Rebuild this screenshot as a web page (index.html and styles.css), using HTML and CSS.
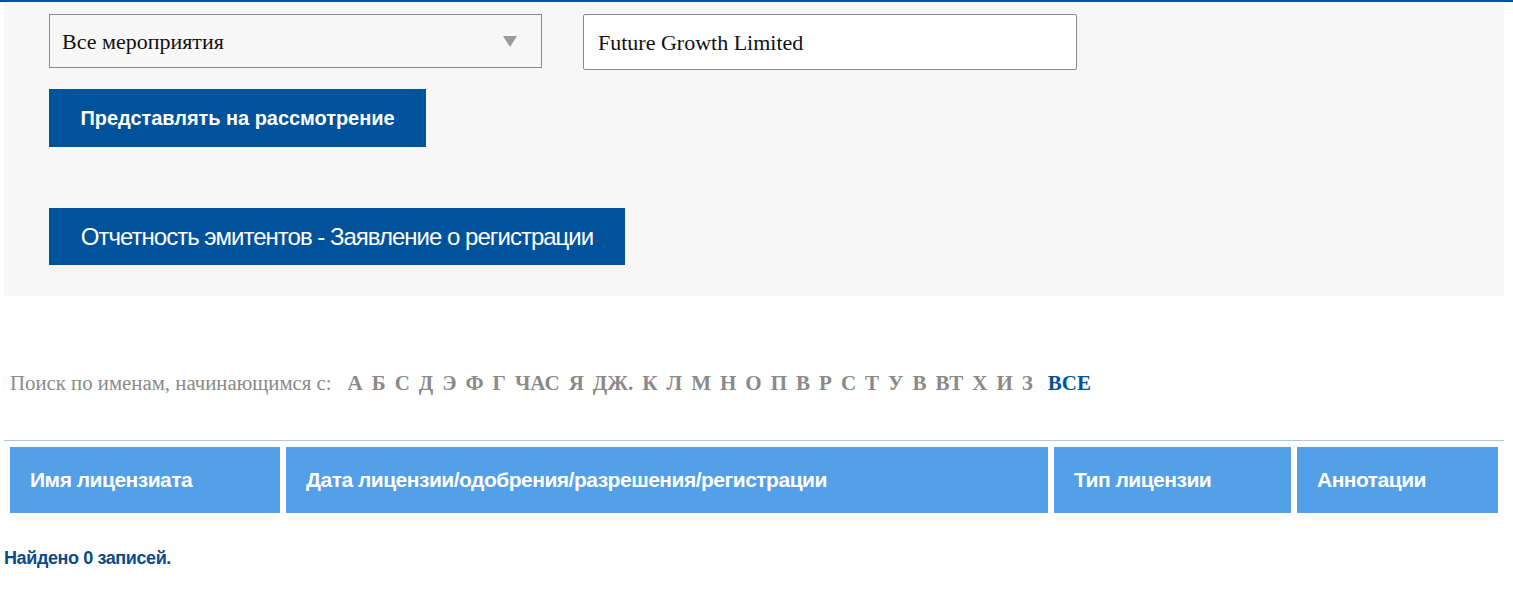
FILE: index.html
```html
<!DOCTYPE html>
<html lang="ru">
<head>
<meta charset="utf-8">
<title>Поиск лицензиатов</title>
<link rel="stylesheet" href="styles.css">
</head>
<body>
<div class="topline"></div>
<div class="page">
  <section class="panel">
    <div class="filters">
      <div class="select">
        <span class="select-text">Все мероприятия</span>
        <svg class="select-arrow" width="14" height="11" viewBox="0 0 14 11"><polygon points="0,0 14,0 7,11" fill="#9b9b9b"/></svg>
      </div>
      <input class="textbox" type="text" value="Future Growth Limited">
    </div>
    <div class="btn-row">
      <button class="btn btn-submit">Представлять на рассмотрение</button>
    </div>
    <div class="btn-row btn-row-second">
      <button class="btn btn-report">Отчетность эмитентов - Заявление о регистрации</button>
    </div>
  </section>

  <nav class="alpha">
    <span class="alpha-label">Поиск по именам, начинающимся с:</span>
    <a class="alpha-link">А</a>
    <a class="alpha-link">Б</a>
    <a class="alpha-link">С</a>
    <a class="alpha-link">Д</a>
    <a class="alpha-link">Э</a>
    <a class="alpha-link">Ф</a>
    <a class="alpha-link">Г</a>
    <a class="alpha-link">ЧАС</a>
    <a class="alpha-link">Я</a>
    <a class="alpha-link">ДЖ.</a>
    <a class="alpha-link">К</a>
    <a class="alpha-link">Л</a>
    <a class="alpha-link">М</a>
    <a class="alpha-link">Н</a>
    <a class="alpha-link">О</a>
    <a class="alpha-link">П</a>
    <a class="alpha-link">В</a>
    <a class="alpha-link">Р</a>
    <a class="alpha-link">С</a>
    <a class="alpha-link">Т</a>
    <a class="alpha-link">У</a>
    <a class="alpha-link">В</a>
    <a class="alpha-link">ВТ</a>
    <a class="alpha-link">Х</a>
    <a class="alpha-link">И</a>
    <a class="alpha-link">З</a>
    <a class="alpha-link alpha-all">ВСЕ</a>
  </nav>

  <table class="results">
    <thead>
      <tr>
        <th class="col-name">Имя лицензиата</th>
        <th class="col-date">Дата лицензии/одобрения/разрешения/регистрации</th>
        <th class="col-type">Тип лицензии</th>
        <th class="col-notes">Аннотации</th>
      </tr>
    </thead>
  </table>

  <p class="found">Найдено 0 записей.</p>
</div>
</body>
</html>
```

FILE: styles.css
```css
html, body {
  margin: 0;
  padding: 0;
  background: #ffffff;
}

body {
  font-family: "Liberation Serif", "Times New Roman", serif;
  color: #111;
}

.topline {
  height: 2px;
  background: #00529b;
}

.page {
  width: 1500px;
  margin-left: 4px;
}

.panel {
  background: #f7f7f7;
  padding: 12px 45px 31px;
}

.filters {
  display: flex;
  align-items: flex-start;
  gap: 41px;
}

.select {
  box-sizing: border-box;
  width: 493px;
  height: 54px;
  border: 1px solid #8a8a8a;
  background: #f7f7f7;
  display: flex;
  align-items: center;
  justify-content: space-between;
  padding: 1px 24px 0 12px;
}

.select-text {
  font-family: "Liberation Serif", "Times New Roman", serif;
  font-size: 22px;
  color: #111;
}

.select-arrow {
  display: block;
}

.textbox {
  box-sizing: border-box;
  width: 494px;
  height: 56px;
  margin: 0;
  border: 1px solid #8a8a8a;
  border-radius: 2px;
  background: #ffffff;
  padding: 2px 14px 0;
  font-family: "Liberation Serif", "Times New Roman", serif;
  font-size: 22px;
  color: #111;
  outline: none;
}

.btn-row {
  margin-top: 19px;
}

.btn-row-second {
  margin-top: 61px;
}

.btn {
  display: block;
  border: 0;
  margin: 0;
  padding: 0;
  background: #00529b;
  color: #ffffff;
  font-family: "Liberation Sans", Arial, sans-serif;
  cursor: pointer;
}

.btn-submit {
  width: 377px;
  height: 58px;
  font-size: 20px;
  font-weight: bold;
  letter-spacing: -0.05px;
}

.btn-report {
  width: 576px;
  height: 57px;
  font-size: 24px;
  font-weight: normal;
  letter-spacing: -1px;
}

.alpha {
  display: flex;
  align-items: baseline;
  gap: 9px;
  padding: 0 6px;
  margin-top: 72px;
  height: 30px;
  line-height: 30px;
}

.alpha-label {
  font-size: 20.8px;
  color: #8a8a8a;
  margin-right: 7px;
}

.alpha-link {
  font-size: 21px;
  font-weight: bold;
  color: #8a8a8a;
  text-decoration: none;
}

.alpha-all {
  color: #00529b;
  margin-left: 6px;
}

.results {
  width: 1500px;
  margin-top: 42px;
  border-top: 1px solid #b8c5d2;
  border-collapse: separate;
  border-spacing: 6px;
}

.results th {
  background: #53a0e8;
  color: #ffffff;
  height: 66px;
  padding: 0 20px;
  text-align: left;
  font-family: "Liberation Sans", Arial, sans-serif;
  font-size: 21px;
  font-weight: bold;
  letter-spacing: -0.5px;
  box-sizing: border-box;
}

.col-name { width: 270px; }
.col-date { width: 762px; }
.col-type { width: 237px; padding-left: 22px; }
.col-notes { width: 201px; }

.found {
  margin: 29px 0 0;
  font-family: "Liberation Sans", Arial, sans-serif;
  font-size: 18px;
  font-weight: bold;
  letter-spacing: -0.4px;
  color: #0a4a8c;
}
```
